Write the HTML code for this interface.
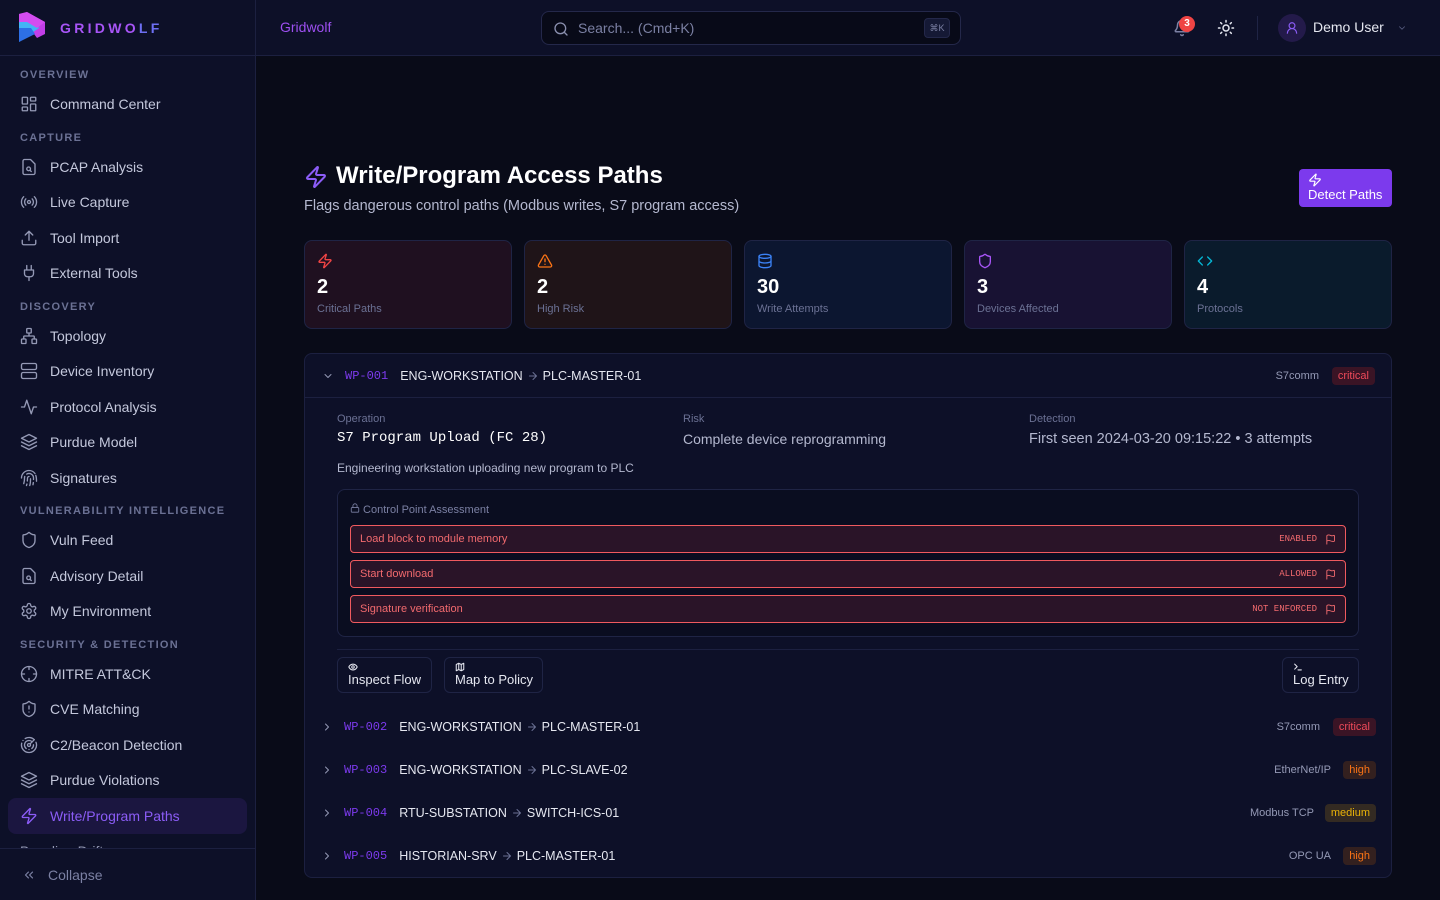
<!DOCTYPE html>
<html><head><meta charset="utf-8"><style>
*{box-sizing:border-box;margin:0;padding:0}
body{width:1440px;height:900px;overflow:hidden;background:#090b18;font-family:"Liberation Sans",sans-serif;color:#e5e7f0;position:relative}
.sb{position:absolute;left:0;top:0;width:256px;height:900px;background:#0d1028;border-right:1px solid #1c2040}
.logo{position:absolute;left:0;top:0;width:256px;height:56px;border-bottom:1px solid #1c2040}
.sec{position:absolute;left:20px;font-size:11px;letter-spacing:1.3px;color:#6b7194;font-weight:bold}
.it{position:absolute;left:8px;width:239px;height:36px;display:flex;align-items:center;padding-left:12px;font-size:14px;color:#c4c8dc;border-radius:8px;white-space:nowrap}
.it svg{width:18px;height:18px;margin-right:12px;stroke:#9499b5;fill:none;stroke-width:1.8;stroke-linecap:round;stroke-linejoin:round}
.it.act{background:#1b1640;color:#8b5cf6}
.it.act svg{stroke:#8b5cf6}
.hd{position:absolute;left:256px;top:0;right:0;height:56px;background:#0d1028;border-bottom:1px solid #1c2040}
svg.i{fill:none;stroke-linecap:round;stroke-linejoin:round}
.card{position:absolute;top:240px;width:208px;height:89px;border-radius:8px;border:1px solid #1f2445;padding:12px}
.card .n{position:absolute;left:12px;top:35px;font-size:20px;font-weight:bold;color:#fff}
.card .l{position:absolute;left:12px;top:62px;font-size:11px;color:#6b7194}
.row{position:absolute;left:0;right:0;height:43px;display:flex;align-items:center;font-size:12.5px;white-space:nowrap}
.mono{font-family:"Liberation Mono",monospace}
.badge{font-size:11px;padding:3px 6px;border-radius:4px}
.cp{position:absolute;left:12px;right:12px;height:28px;border:1px solid #f05a5f;border-radius:4px;background:#2a1428;font-size:11px;color:#f26a6e;display:flex;align-items:center;padding-left:9px}
.cp .st{position:absolute;right:28px;font-family:"Liberation Mono",monospace;font-size:9px}
.cp svg{position:absolute;right:9px}
.btn{position:absolute;top:657px;height:36px;border:1px solid #1f2445;border-radius:6px;padding:4px 10px;font-size:13px;color:#e5e7f0;white-space:nowrap}
.ar{display:inline-block;vertical-align:middle;margin:0 4px}
</style></head><body>
<div class="sb">
 <div class="logo">
  <svg style="position:absolute;left:17px;top:12px" width="30" height="32" viewBox="0 0 30 32"><polygon points="2,2 10,0 28,10 28,22 20,26" fill="#c23ee8"/><polygon points="2,10 18,10 22,16 2,30" fill="#42b4f5"/><polygon points="2,16 14,16 18,22 2,30" fill="#2d6fe6"/><polygon points="2,2 2,10 10,10 20,16 28,10 10,0" fill="#d34cf0"/></svg>
  <div style="position:absolute;left:60px;top:20px;font-size:14px;font-weight:bold;letter-spacing:3.3px;color:#a855f7">GRIDWO<span style="color:#6d6ff3">LF</span></div>
 </div>
 <div class="sec" style="top:69px">OVERVIEW</div>
 <div class="it" style="top:86px"><svg viewBox="0 0 24 24"><rect x="3" y="3" width="7" height="9" rx="1"/><rect x="14" y="3" width="7" height="5" rx="1"/><rect x="14" y="12" width="7" height="9" rx="1"/><rect x="3" y="16" width="7" height="5" rx="1"/></svg>Command Center</div>
 <div class="sec" style="top:132px">CAPTURE</div>
 <div class="it" style="top:149px"><svg viewBox="0 0 24 24"><path d="M14 2H6a2 2 0 0 0-2 2v16a2 2 0 0 0 2 2h12a2 2 0 0 0 2-2V8z"/><circle cx="11.5" cy="14.5" r="2.5"/><path d="M13.3 16.3 15 18"/></svg>PCAP Analysis</div>
 <div class="it" style="top:184px"><svg viewBox="0 0 24 24"><circle cx="12" cy="12" r="2"/><path d="M16.2 7.8a6 6 0 0 1 0 8.4M7.8 16.2a6 6 0 0 1 0-8.4M19.1 4.9a10 10 0 0 1 0 14.2M4.9 19.1a10 10 0 0 1 0-14.2"/></svg>Live Capture</div>
 <div class="it" style="top:220px"><svg viewBox="0 0 24 24"><path d="M21 15v4a2 2 0 0 1-2 2H5a2 2 0 0 1-2-2v-4M17 8l-5-5-5 5M12 3v12"/></svg>Tool Import</div>
 <div class="it" style="top:255px"><svg viewBox="0 0 24 24"><path d="M12 22v-5M9 8V2M15 8V2M18 8v5a4 4 0 0 1-4 4h-4a4 4 0 0 1-4-4V8z"/></svg>External Tools</div>
 <div class="sec" style="top:301px">DISCOVERY</div>
 <div class="it" style="top:318px"><svg viewBox="0 0 24 24"><rect x="16" y="16" width="6" height="6" rx="1"/><rect x="2" y="16" width="6" height="6" rx="1"/><rect x="9" y="2" width="6" height="6" rx="1"/><path d="M5 16v-3a1 1 0 0 1 1-1h12a1 1 0 0 1 1 1v3M12 12V8"/></svg>Topology</div>
 <div class="it" style="top:353px"><svg viewBox="0 0 24 24"><rect x="2" y="2" width="20" height="8" rx="2"/><rect x="2" y="14" width="20" height="8" rx="2"/></svg>Device Inventory</div>
 <div class="it" style="top:389px"><svg viewBox="0 0 24 24"><path d="M22 12h-4l-3 9L9 3l-3 9H2"/></svg>Protocol Analysis</div>
 <div class="it" style="top:424px"><svg viewBox="0 0 24 24"><path d="m12 2 10 5-10 5L2 7z"/><path d="m2 12 10 5 10-5M2 17l10 5 10-5"/></svg>Purdue Model</div>
 <div class="it" style="top:460px"><svg viewBox="0 0 24 24"><path d="M2 12C2 6.5 6.5 2 12 2a10 10 0 0 1 8 4M5 19.5C5.5 18 6 15 6 12a6 6 0 0 1 .34-2M12 10a2 2 0 0 0-2 2c0 1.02-.1 2.51-.26 4M17.29 21.02c.12-.6.43-2.3.5-3.02M14 13.12c0 2.380 0 6.38-1 8.88M22 16.25c0-4-.31-6-1-7.75M8.65 22c.21-.66.45-1.32.57-2M9 6.8a6 6 0 0 1 9 5.2v2"/></svg>Signatures</div>
 <div class="sec" style="top:505px">VULNERABILITY INTELLIGENCE</div>
 <div class="it" style="top:522px"><svg viewBox="0 0 24 24"><path d="M20 13c0 5-3.5 7.5-7.66 8.95a1 1 0 0 1-.67-.01C7.5 20.5 4 18 4 13V6a1 1 0 0 1 1-1c2 0 4.5-1.2 6.24-2.72a1.17 1.17 0 0 1 1.52 0C14.51 3.81 17 5 19 5a1 1 0 0 1 1 1z"/></svg>Vuln Feed</div>
 <div class="it" style="top:558px"><svg viewBox="0 0 24 24"><path d="M14 2H6a2 2 0 0 0-2 2v16a2 2 0 0 0 2 2h12a2 2 0 0 0 2-2V8z"/><circle cx="11.5" cy="14.5" r="2.5"/><path d="M13.3 16.3 15 18"/></svg>Advisory Detail</div>
 <div class="it" style="top:593px"><svg viewBox="0 0 24 24"><circle cx="12" cy="12" r="3"/><path d="M12.22 2h-.44a2 2 0 0 0-2 2v.18a2 2 0 0 1-1 1.730l-.43.25a2 2 0 0 1-2 0l-.15-.08a2 2 0 0 0-2.73.73l-.22.38a2 2 0 0 0 .73 2.73l.15.1a2 2 0 0 1 1 1.72v.51a2 2 0 0 1-1 1.74l-.15.09a2 2 0 0 0-.73 2.73l.22.38a2 2 0 0 0 2.73.73l.15-.08a2 2 0 0 1 2 0l.43.25a2 2 0 0 1 1 1.73V20a2 2 0 0 0 2 2h.44a2 2 0 0 0 2-2v-.18a2 2 0 0 1 1-1.73l.43-.25a2 2 0 0 1 2 0l.15.08a2 2 0 0 0 2.73-.73l.22-.39a2 2 0 0 0-.73-2.73l-.15-.08a2 2 0 0 1-1-1.74v-.5a2 2 0 0 1 1-1.74l.15-.09a2 2 0 0 0 .73-2.73l-.22-.38a2 2 0 0 0-2.73-.73l-.15.08a2 2 0 0 1-2 0l-.43-.25a2 2 0 0 1-1-1.73V4a2 2 0 0 0-2-2z"/></svg>My Environment</div>
 <div class="sec" style="top:639px">SECURITY &amp; DETECTION</div>
 <div class="it" style="top:656px"><svg viewBox="0 0 24 24"><circle cx="12" cy="12" r="10"/><path d="M22 12h-4M6 12H2M12 6V2M12 22v-4"/></svg>MITRE ATT&amp;CK</div>
 <div class="it" style="top:691px"><svg viewBox="0 0 24 24"><path d="M20 13c0 5-3.5 7.5-7.66 8.95a1 1 0 0 1-.67-.01C7.5 20.5 4 18 4 13V6a1 1 0 0 1 1-1c2 0 4.5-1.2 6.24-2.72a1.17 1.17 0 0 1 1.52 0C14.51 3.81 17 5 19 5a1 1 0 0 1 1 1z"/><path d="M12 8v4M12 16h.01"/></svg>CVE Matching</div>
 <div class="it" style="top:727px"><svg viewBox="0 0 24 24"><path d="M19.07 4.93A10 10 0 0 0 6.99 3.34M4 6h.01M2.29 9.62A10 10 0 1 0 21.31 8.35M16.24 7.76A6 6 0 1 0 8.23 16.67M12 18h.01M17.99 11.66A6 6 0 0 1 15.77 16.67"/><circle cx="12" cy="12" r="2"/><path d="m13.41 10.59 5.66-5.66"/></svg>C2/Beacon Detection</div>
 <div class="it" style="top:762px"><svg viewBox="0 0 24 24"><path d="m12 2 10 5-10 5L2 7z"/><path d="m2 12 10 5 10-5M2 17l10 5 10-5"/></svg>Purdue Violations</div>
 <div class="it act" style="top:798px"><svg viewBox="0 0 24 24"><path d="M4 14a1 1 0 0 1-.78-1.63l9.9-10.2a.5.5 0 0 1 .86.46l-1.92 6.02A1 1 0 0 0 13 10h7a1 1 0 0 1 .78 1.63l-9.9 10.2a.5.5 0 0 1-.86-.46l1.92-6.02A1 1 0 0 0 11 14z"/></svg>Write/Program Paths</div>
 <div style="position:absolute;left:0;top:836px;width:255px;height:12px;overflow:hidden"><div class="it" style="top:-3px;color:#9499b5">Baseline Drift</div></div>
 <div style="position:absolute;left:0;top:848px;width:255px;height:52px;border-top:1px solid #1c2040;background:#0d1028">
  <svg class="i" style="position:absolute;left:22px;top:19px" width="14" height="14" viewBox="0 0 24 24" stroke="#7b80a3" stroke-width="2"><path d="m11 17-5-5 5-5M18 17l-5-5 5-5"/></svg>
  <div style="position:absolute;left:48px;top:18px;font-size:14px;color:#7b80a3">Collapse</div>
 </div>
</div>

<div class="hd">
 <div style="position:absolute;left:24px;top:19px;font-size:14px;color:#9d4ff0">Gridwolf</div>
 <div style="position:absolute;left:285px;top:11px;width:420px;height:34px;border:1px solid #24284a;border-radius:8px;background:#080a18">
  <svg class="i" style="position:absolute;left:11px;top:9px" width="16" height="16" viewBox="0 0 24 24" stroke="#8a8fae" stroke-width="2"><circle cx="11" cy="11" r="8"/><path d="m21 21-4.3-4.3"/></svg>
  <div style="position:absolute;left:36px;top:8px;font-size:14px;color:#7b80a3">Search... (Cmd+K)</div>
  <div style="position:absolute;right:10px;top:6px;width:26px;height:20px;border-radius:4px;background:#151935;border:1px solid #24284a;font-size:9px;color:#7b80a3;text-align:center;line-height:18px">⌘K</div>
 </div>
 <svg class="i" style="position:absolute;left:917px;top:19px" width="18" height="18" viewBox="0 0 24 24" stroke="#7b80a3" stroke-width="2"><path d="M10.3 21a1.94 1.94 0 0 0 3.4 0M3.26 15.33A1 1 0 0 0 4 17h16a1 1 0 0 0 .74-1.670C19.41 13.96 18 12.5 18 8A6 6 0 0 0 6 8c0 4.5-1.41 5.96-2.74 7.33"/></svg>
 <div style="position:absolute;left:923px;top:16px;width:16px;height:16px;border-radius:8px;background:#ef4444;font-size:10px;font-weight:bold;color:#fff;text-align:center;line-height:16px">3</div>
 <svg class="i" style="position:absolute;left:961px;top:19px" width="18" height="18" viewBox="0 0 24 24" stroke="#e5e7f0" stroke-width="2"><circle cx="12" cy="12" r="4"/><path d="M12 2v2M12 20v2M4.93 4.93l1.41 1.41M17.66 17.66l1.41 1.41M2 12h2M20 12h2M6.34 17.66l-1.41 1.41M19.07 4.93l-1.41 1.41"/></svg>
 <div style="position:absolute;left:1001px;top:16px;width:1px;height:24px;background:#1f2445"></div>
 <div style="position:absolute;left:1022px;top:14px;width:28px;height:28px;border-radius:14px;background:#231a4a"><svg class="i" style="position:absolute;left:7px;top:7px" width="14" height="14" viewBox="0 0 24 24" stroke="#8b5cf6" stroke-width="2"><circle cx="12" cy="8" r="5"/><path d="M20 21a8 8 0 0 0-16 0"/></svg></div>
 <div style="position:absolute;left:1057px;top:19px;font-size:14px;color:#e5e7f0">Demo User</div>
 <svg class="i" style="position:absolute;left:1141px;top:23px" width="10" height="10" viewBox="0 0 24 24" stroke="#5b6085" stroke-width="2"><path d="m6 9 6 6 6-6"/></svg>
</div>

<svg class="i" style="position:absolute;left:304px;top:165px" width="24" height="24" viewBox="0 0 24 24" stroke="#8b5cf6" stroke-width="2"><path d="M4 14a1 1 0 0 1-.78-1.63l9.9-10.2a.5.5 0 0 1 .86.46l-1.92 6.02A1 1 0 0 0 13 10h7a1 1 0 0 1 .78 1.63l-9.9 10.2a.5.5 0 0 1-.86-.46l1.92-6.02A1 1 0 0 0 11 14z"/></svg>
<div style="position:absolute;left:336px;top:162px;font-size:24px;font-weight:bold;color:#fff">Write/Program Access Paths</div>
<div style="position:absolute;left:304px;top:198px;font-size:14.5px;color:#b4b8cf">Flags dangerous control paths (Modbus writes, S7 program access)</div>
<div style="position:absolute;left:1299px;top:169px;width:93px;height:38px;border-radius:4px;background:#7c3aed;font-size:13px;color:#fff;padding:3px 9px;white-space:nowrap">
 <svg class="i" width="14" height="14" viewBox="0 0 24 24" stroke="#fff" stroke-width="2" style="display:block;margin-top:1px"><path d="M4 14a1 1 0 0 1-.78-1.63l9.9-10.2a.5.5 0 0 1 .86.46l-1.92 6.02A1 1 0 0 0 13 10h7a1 1 0 0 1 .78 1.63l-9.9 10.2a.5.5 0 0 1-.86-.46l1.92-6.02A1 1 0 0 0 11 14z"/></svg>Detect Paths</div>

<div class="card" style="left:304px;background:#1f1020"><svg class="i" width="16" height="16" viewBox="0 0 24 24" stroke="#ef4444" stroke-width="2"><path d="M4 14a1 1 0 0 1-.78-1.63l9.9-10.2a.5.5 0 0 1 .86.46l-1.92 6.02A1 1 0 0 0 13 10h7a1 1 0 0 1 .78 1.63l-9.9 10.2a.5.5 0 0 1-.86-.46l1.92-6.02A1 1 0 0 0 11 14z"/></svg><div class="n">2</div><div class="l">Critical Paths</div></div>
<div class="card" style="left:524px;background:#1f1418"><svg class="i" width="16" height="16" viewBox="0 0 24 24" stroke="#f97316" stroke-width="2"><path d="m21.73 18-8-14a2 2 0 0 0-3.48 0l-8 14A2 2 0 0 0 4 21h16a2 2 0 0 0 1.73-3M12 9v4M12 17h.01"/></svg><div class="n">2</div><div class="l">High Risk</div></div>
<div class="card" style="left:744px;background:#0c1630"><svg class="i" width="16" height="16" viewBox="0 0 24 24" stroke="#3b82f6" stroke-width="2"><ellipse cx="12" cy="5" rx="9" ry="3"/><path d="M3 5v14a9 3 0 0 0 18 0V5M3 12a9 3 0 0 0 18 0"/></svg><div class="n">30</div><div class="l">Write Attempts</div></div>
<div class="card" style="left:964px;background:#181233"><svg class="i" width="16" height="16" viewBox="0 0 24 24" stroke="#a855f7" stroke-width="2"><path d="M20 13c0 5-3.5 7.5-7.66 8.95a1 1 0 0 1-.67-.01C7.5 20.5 4 18 4 13V6a1 1 0 0 1 1-1c2 0 4.5-1.2 6.24-2.72a1.17 1.17 0 0 1 1.52 0C14.51 3.81 17 5 19 5a1 1 0 0 1 1 1z"/></svg><div class="n">3</div><div class="l">Devices Affected</div></div>
<div class="card" style="left:1184px;background:#0a1b2c"><svg class="i" width="16" height="16" viewBox="0 0 24 24" stroke="#06b6d4" stroke-width="2"><path d="m16 18 6-6-6-6M8 6l-6 6 6 6"/></svg><div class="n">4</div><div class="l">Protocols</div></div>

<div style="position:absolute;left:304px;top:353px;width:1088px;height:525px;border:1px solid #1c2040;border-radius:8px;background:#0d1028;overflow:hidden">
 <div class="row" style="top:0;height:44px;border-bottom:1px solid #1c2040">
  <svg class="i" style="margin-left:17px" width="12" height="12" viewBox="0 0 24 24" stroke="#9499b5" stroke-width="2"><path d="m6 9 6 6 6-6"/></svg>
  <span class="mono" style="margin-left:11px;color:#7c3aed;font-size:12px">WP-001</span><span style="margin-left:12px">ENG-WORKSTATION<svg class="ar i" width="12" height="12" viewBox="0 0 24 24" stroke="#6b7194" stroke-width="2"><path d="M5 12h14M12 5l7 7-7 7"/></svg>PLC-MASTER-01</span>
  <span style="position:absolute;right:72px;font-size:11px;color:#9499b5">S7comm</span><span class="badge" style="position:absolute;right:16px;background:#3a1425;color:#ef4a5a">critical</span>
 </div>
 <div style="position:absolute;left:32px;top:59px;font-size:11px;color:#6b7194">Operation</div>
 <div class="mono" style="position:absolute;left:32px;top:76px;font-size:14px;color:#fff">S7 Program Upload (FC 28)</div>
 <div style="position:absolute;left:378px;top:59px;font-size:11px;color:#6b7194">Risk</div>
 <div style="position:absolute;left:378px;top:77px;font-size:14px;color:#b4b8cf">Complete device reprogramming</div>
 <div style="position:absolute;left:724px;top:59px;font-size:11px;color:#6b7194">Detection</div>
 <div style="position:absolute;left:724px;top:77px;font-size:14.5px;color:#b4b8cf">First seen 2024-03-20 09:15:22 • 3 attempts</div>
 <div style="position:absolute;left:32px;top:107px;font-size:12px;color:#b4b8cf">Engineering workstation uploading new program to PLC</div>
 <div style="position:absolute;left:32px;top:135px;width:1022px;height:148px;border:1px solid #1f2445;border-radius:8px;background:#0a0d20">
  <div style="position:absolute;left:12px;top:13px;font-size:11px;color:#7b80a3"><svg class="i" width="10" height="10" viewBox="0 0 24 24" stroke="#7b80a3" stroke-width="2"><rect x="3" y="11" width="18" height="11" rx="2"/><path d="M7 11V7a5 5 0 0 1 10 0v4"/></svg> Control Point Assessment</div>
  <div class="cp" style="top:35px">Load block to module memory<span class="st">ENABLED</span><svg class="i" width="11" height="11" viewBox="0 0 24 24" stroke="#f26a6e" stroke-width="2"><path d="M4 22V4a1 1 0 0 1 .4-.8A6 6 0 0 1 8 2c3 0 5 2 7.33 2q2 0 3.67-.8a1 1 0 0 1 1.6.8v11a1 1 0 0 1-.4.8A6 6 0 0 1 16 16c-3 0-5-2-8-2a6 6 0 0 0-4 1.53"/></svg></div>
  <div class="cp" style="top:70px">Start download<span class="st">ALLOWED</span><svg class="i" width="11" height="11" viewBox="0 0 24 24" stroke="#f26a6e" stroke-width="2"><path d="M4 22V4a1 1 0 0 1 .4-.8A6 6 0 0 1 8 2c3 0 5 2 7.33 2q2 0 3.67-.8a1 1 0 0 1 1.6.8v11a1 1 0 0 1-.4.8A6 6 0 0 1 16 16c-3 0-5-2-8-2a6 6 0 0 0-4 1.53"/></svg></div>
  <div class="cp" style="top:105px">Signature verification<span class="st">NOT ENFORCED</span><svg class="i" width="11" height="11" viewBox="0 0 24 24" stroke="#f26a6e" stroke-width="2"><path d="M4 22V4a1 1 0 0 1 .4-.8A6 6 0 0 1 8 2c3 0 5 2 7.33 2q2 0 3.67-.8a1 1 0 0 1 1.6.8v11a1 1 0 0 1-.4.8A6 6 0 0 1 16 16c-3 0-5-2-8-2a6 6 0 0 0-4 1.53"/></svg></div>
 </div>
 <div style="position:absolute;left:32px;top:295px;width:1022px;height:1px;background:#1c2040"></div>
</div>
<div class="btn" style="left:337px;width:95px"><svg class="i" style="display:block" width="10" height="10" viewBox="0 0 24 24" stroke="#e5e7f0" stroke-width="2.5"><path d="M2 12s3-7 10-7 10 7 10 7-3 7-10 7-10-7-10-7z"/><circle cx="12" cy="12" r="3"/></svg>Inspect Flow</div>
<div class="btn" style="left:444px;width:99px"><svg class="i" style="display:block" width="10" height="10" viewBox="0 0 24 24" stroke="#e5e7f0" stroke-width="2.5"><path d="M3 6l6-3 6 3 6-3v15l-6 3-6-3-6 3zM9 3v15M15 6v15"/></svg>Map to Policy</div>
<div class="btn" style="left:1282px;width:77px"><svg class="i" style="display:block" width="10" height="10" viewBox="0 0 24 24" stroke="#e5e7f0" stroke-width="2.5"><path d="m4 17 6-6-6-6M12 19h8"/></svg>Log Entry</div>

<div style="position:absolute;left:304px;top:705px;width:1088px;height:172px">
 <div class="row" style="top:0"><svg class="i" style="margin-left:17px" width="12" height="12" viewBox="0 0 24 24" stroke="#9499b5" stroke-width="2"><path d="m9 18 6-6-6-6"/></svg><span class="mono" style="margin-left:11px;color:#7c3aed;font-size:12px">WP-002</span><span style="margin-left:12px">ENG-WORKSTATION<svg class="ar i" width="12" height="12" viewBox="0 0 24 24" stroke="#6b7194" stroke-width="2"><path d="M5 12h14M12 5l7 7-7 7"/></svg>PLC-MASTER-01</span><span style="position:absolute;right:72px;font-size:11px;color:#9499b5">S7comm</span><span class="badge" style="position:absolute;right:16px;background:#3a1425;color:#ef4a5a">critical</span></div>
 <div class="row" style="top:43px"><svg class="i" style="margin-left:17px" width="12" height="12" viewBox="0 0 24 24" stroke="#9499b5" stroke-width="2"><path d="m9 18 6-6-6-6"/></svg><span class="mono" style="margin-left:11px;color:#7c3aed;font-size:12px">WP-003</span><span style="margin-left:12px">ENG-WORKSTATION<svg class="ar i" width="12" height="12" viewBox="0 0 24 24" stroke="#6b7194" stroke-width="2"><path d="M5 12h14M12 5l7 7-7 7"/></svg>PLC-SLAVE-02</span><span style="position:absolute;right:61px;font-size:11px;color:#9499b5">EtherNet/IP</span><span class="badge" style="position:absolute;right:16px;background:#33201f;color:#f97316">high</span></div>
 <div class="row" style="top:86px"><svg class="i" style="margin-left:17px" width="12" height="12" viewBox="0 0 24 24" stroke="#9499b5" stroke-width="2"><path d="m9 18 6-6-6-6"/></svg><span class="mono" style="margin-left:11px;color:#7c3aed;font-size:12px">WP-004</span><span style="margin-left:12px">RTU-SUBSTATION<svg class="ar i" width="12" height="12" viewBox="0 0 24 24" stroke="#6b7194" stroke-width="2"><path d="M5 12h14M12 5l7 7-7 7"/></svg>SWITCH-ICS-01</span><span style="position:absolute;right:78px;font-size:11px;color:#9499b5">Modbus TCP</span><span class="badge" style="position:absolute;right:16px;background:#332a22;color:#eab308">medium</span></div>
 <div class="row" style="top:129px"><svg class="i" style="margin-left:17px" width="12" height="12" viewBox="0 0 24 24" stroke="#9499b5" stroke-width="2"><path d="m9 18 6-6-6-6"/></svg><span class="mono" style="margin-left:11px;color:#7c3aed;font-size:12px">WP-005</span><span style="margin-left:12px">HISTORIAN-SRV<svg class="ar i" width="12" height="12" viewBox="0 0 24 24" stroke="#6b7194" stroke-width="2"><path d="M5 12h14M12 5l7 7-7 7"/></svg>PLC-MASTER-01</span><span style="position:absolute;right:61px;font-size:11px;color:#9499b5">OPC UA</span><span class="badge" style="position:absolute;right:16px;background:#33201f;color:#f97316">high</span></div>
</div>
</body></html>
